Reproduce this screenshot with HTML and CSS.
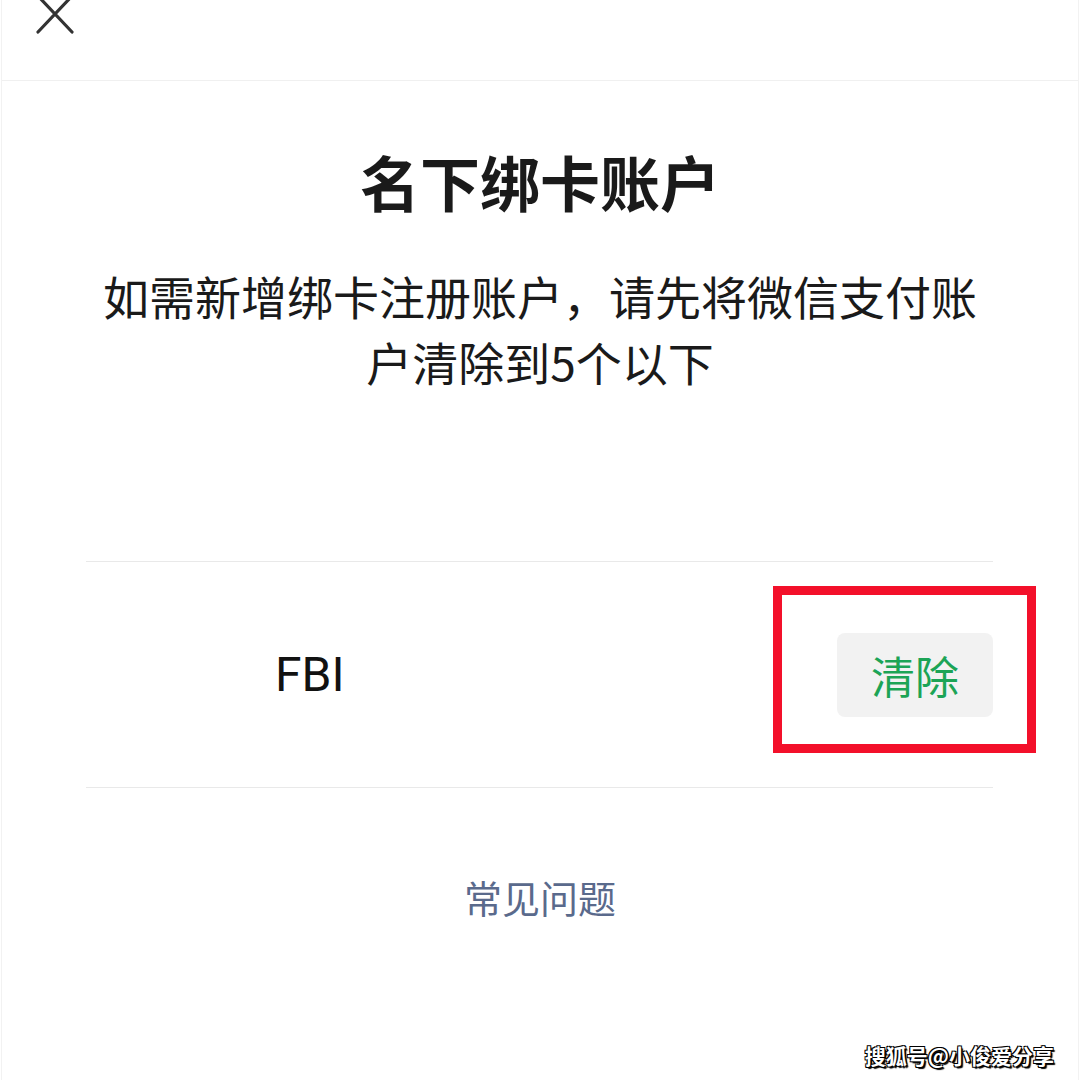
FILE: index.html
```html
<!DOCTYPE html>
<html lang="zh-CN">
<head>
  <meta charset="UTF-8">
  <title>名下绑卡账户</title>
  <link rel="stylesheet" href="styles.css">
</head>
<body>

  <div class="page">
    <header class="topbar">
      <svg class="close" width="44" height="40" viewBox="0 0 44 40">
        <path d="M5 -4 L39 32 M39 -4 L5 32" stroke="#333" stroke-width="3.2" stroke-linecap="round" fill="none"/>
      </svg>
    </header>

    <main class="content">
      <h1 class="title">名下绑卡账户</h1>
      <p class="desc">如需新增绑卡注册账户，请先将微信支付账户清除到5个以下</p>

      <div class="account-list">
        <div class="account-row">
          <span class="account-name">FBI</span>
          <div class="action">
            <button class="clear-btn">清除</button>
            <div class="mark"></div>
          </div>
        </div>
      </div>

      <a class="faq">常见问题</a>
    </main>

    <div class="watermark">搜狐号@小俊爱分享</div>
  </div>

</body>
</html>
```

FILE: styles.css
```css
body {
  margin: 0;
  background: #fff;
  font-family: "Noto Sans CJK SC", "Noto Sans", sans-serif;
  color: #1a1a1a;
}

.page {
  position: relative;
  width: 1076px;
  height: 1080px;
  margin: 0 1px;
  border-left: 1px solid #f2f2f2;
  border-right: 1px solid #f2f2f2;
  overflow: hidden;
}

.topbar {
  height: 80px;
  border-bottom: 1px solid #f0f0f0;
}
.close {
  display: block;
  margin-left: 31px;
}

.content {
  display: flex;
  flex-direction: column;
  align-items: center;
}

.title {
  margin: 65px 0 0;
  font-size: 60px;
  line-height: 70px;
  font-weight: bold;
  color: #1a1a1a;
}

.desc {
  margin: 46px 0 0;
  max-width: 890px;
  font-size: 46px;
  line-height: 66px;
  text-align: center;
  color: #1a1a1a;
}

.account-list {
  align-self: stretch;
  margin: 167px 85px 0 84px;
  border-top: 1px solid #e9e9e9;
  border-bottom: 1px solid #e9e9e9;
}

.account-row {
  display: flex;
  justify-content: space-between;
  align-items: center;
  height: 225px;
  padding-left: 189px;
}

.account-name {
  font-family: Roboto, "Liberation Sans", sans-serif;
  font-size: 48px;
  color: #111;
}

.action {
  position: relative;
}

.clear-btn {
  display: block;
  width: 156px;
  height: 84px;
  padding: 0;
  border: none;
  border-radius: 8px;
  background: #f2f2f2;
  font-family: "Noto Sans CJK SC", sans-serif;
  font-size: 44px;
  color: #1ca456;
}

/* red annotation box drawn over the button */
.mark {
  position: absolute;
  top: -47px;
  left: -64px;
  right: -43px;
  bottom: -36px;
  border: 9px solid #f3102a;
}

.faq {
  margin-top: 84px;
  font-size: 38px;
  line-height: 50px;
  color: #5a6a8c;
}

.watermark {
  position: absolute;
  right: 24px;
  bottom: 10px;
  font-size: 21px;
  font-weight: bold;
  color: #fff;
  text-shadow: 1px 1px 0 #000, -1px -1px 0 #000, 1px -1px 0 #000, -1px 1px 0 #000, 2px 2px 1px #000;
}
```
